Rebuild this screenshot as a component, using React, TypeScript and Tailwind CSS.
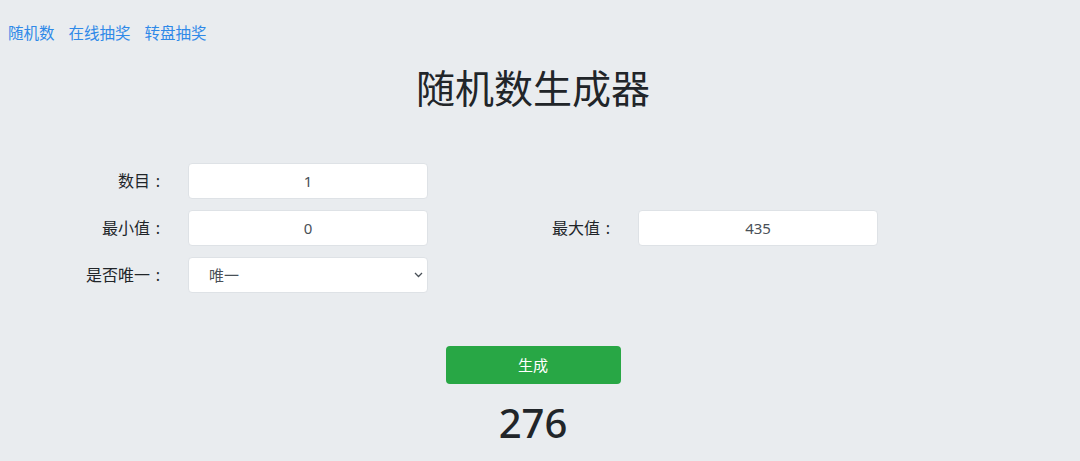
import React from "react";

const font = { fontFamily: '"Noto Sans", "Noto Sans CJK SC", sans-serif' };

const Field = ({ label, children }: { label: string; children: React.ReactNode }) => (
    <div className="flex items-center w-[450px]">
        <label className="w-[180px] pr-[14px] text-right text-[16px] text-[#212529]">
            {label}
            <span className="inline-block w-[16px] text-center">:</span>
        </label>
        <div className="ml-[8px] w-[240px]">{children}</div>
    </div>
);

const inputCls =
    "w-full h-[36px] bg-white border border-[#dee2e6] rounded-[4px] text-center text-[15px] text-[#495057] outline-none";

const App = () => {
    return (
        <div className="min-h-[461px] bg-[#e9ecef] w-full" style={font}>
            <nav className="flex gap-[14px] pl-[8px] pt-[21px] text-[15.5px] leading-[24px] text-[#2f89e8]">
                <a href="#">随机数</a>
                <a href="#">在线抽奖</a>
                <a href="#">转盘抽奖</a>
            </nav>

            <div className="w-[1066px]">
                <h1 className="mt-[21px] text-center text-[39px] leading-[44px] text-[#212529] font-normal">
                    随机数生成器
                </h1>

                <div className="mt-[53px] flex flex-col gap-[11px]">
                    <div className="flex">
                        <Field label="数目">
                            <input className={inputCls} defaultValue="1" />
                        </Field>
                    </div>
                    <div className="flex">
                        <Field label="最小值">
                            <input className={inputCls} defaultValue="0" />
                        </Field>
                        <Field label="最大值">
                            <input className={inputCls} defaultValue="435" />
                        </Field>
                    </div>
                    <div className="flex">
                        <Field label="是否唯一">
                            <div className="relative">
                                <select className="w-full h-[36px] appearance-none bg-white border border-[#dee2e6] rounded-[4px] pl-[20px] text-[15px] text-[#495057] outline-none">
                                    <option>唯一</option>
                                    <option>不唯一</option>
                                </select>
                                <svg
                                    className="absolute right-[5px] top-[15px]"
                                    width="9"
                                    height="6"
                                    viewBox="0 0 9 6"
                                    fill="none"
                                    stroke="#495057"
                                    strokeWidth="1.3"
                                >
                                    <path d="M1 1l3.5 3.5L8 1" />
                                </svg>
                            </div>
                        </Field>
                    </div>
                </div>

                <div className="mt-[53px] flex justify-center">
                    <button className="w-[175px] h-[38px] bg-[#28a745] text-white text-[15px] rounded-[4px]">
                        生成
                    </button>
                </div>

                <div className="mt-[15px] text-center text-[40px] leading-[48px] font-medium text-[#212529]">
                    276
                </div>
            </div>
        </div>
    );
};

export default App;
